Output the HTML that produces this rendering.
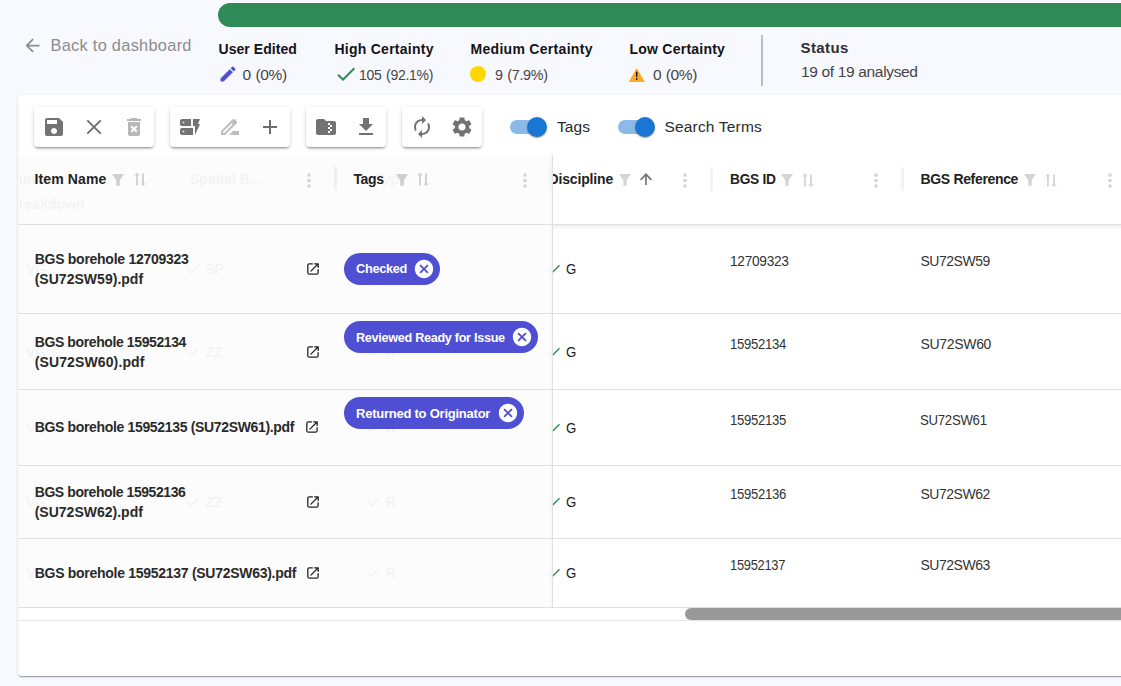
<!DOCTYPE html>
<html lang="en">
<head>
<meta charset="utf-8">
<title>Analysis</title>
<style>
html,body{margin:0;padding:0;overflow:hidden;background:#f8f8ff;}
#app{width:1121px;height:686px;overflow:hidden;background:#f8f8ff;font-family:"Liberation Sans",sans-serif;position:relative;}
.a{position:absolute;}
.t{position:absolute;white-space:nowrap;line-height:1;}
.ic{position:absolute;display:block;}
.grp{position:absolute;top:107px;height:40px;background:#fff;border-radius:4px;box-shadow:0 3px 1px -2px rgba(0,0,0,.2),0 2px 2px 0 rgba(0,0,0,.14),0 1px 5px 0 rgba(0,0,0,.12);}
.hl{position:absolute;left:18px;width:1103px;height:1px;background:#e0e0e0;}
.sep{position:absolute;top:166px;height:24px;width:3px;background:#f0f0f0;border-radius:1px;}
.chip{position:absolute;height:32px;border-radius:16px;background:#4f4fd3;left:344px;}
.ghost{position:absolute;white-space:nowrap;line-height:1;color:#efefef;font-size:14px;}
</style>
</head>
<body>
<div id="app">
<!-- progress -->
<div class="a" style="left:218px;top:3px;width:920px;height:24px;border-radius:12px;background:#2e8b57;"></div>
<svg class="ic" style="left:21.50px;top:34.50px;" width="21.0" height="21.0" viewBox="0 0 24 24"><path fill="#8c8c8c" d="M20 11H7.83l5.59-5.59L12 4l-8 8 8 8 1.41-1.41L7.83 13H20v-2z"/></svg>
<svg class="ic" style="left:217.80px;top:64.00px;" width="20.0" height="20.0" viewBox="0 0 24 24"><path fill="#4f4fd3" d="M3 17.25V21h3.75L17.81 9.94l-3.75-3.75L3 17.25zM20.71 7.04c.39-.39.39-1.02 0-1.41l-2.34-2.34c-.39-.39-1.02-.39-1.41 0l-1.83 1.83 3.75 3.75 1.83-1.83z"/></svg>
<svg class="ic" style="left:333.70px;top:61.60px;" width="24.0" height="24.0" viewBox="0 0 24 24"><path fill="#2e8b57" d="M9 16.17L4.83 12l-1.42 1.41L9 19 21 7l-1.41-1.41z"/></svg>
<div class="a" style="left:470px;top:66px;width:16px;height:16px;border-radius:50%;background:#ffd700;"></div>
<svg class="ic" style="left:628px;top:67px" width="18" height="16" viewBox="0 0 18 16"><path fill="#ffa927" d="M8.7 0.9L16.9 14.9H0.7z"/><path fill="#111" d="M7.95 4.8h1.5l-.15 5.3h-1.2zM8 11.1h1.4v1.7H8z"/></svg>
<div class="a" style="left:761px;top:35px;width:2px;height:51px;background:#bdbdbd;"></div>

<!-- card -->
<div class="a" style="left:18px;top:95px;width:1120px;height:581px;background:#fff;border-radius:4px;box-shadow:0 2px 1px -1px rgba(0,0,0,.2),0 1px 1px 0 rgba(0,0,0,.14),0 1px 3px 0 rgba(0,0,0,.12);"></div>

<!-- scrolled content under frozen -->
<svg class="ic" style="left:546px;top:261px" width="16" height="16" viewBox="0 0 24 24"><path fill="#2e8b57" d="M9 16.17L4.83 12l-1.42 1.41L9 19 21 7l-1.41-1.41z"/></svg>
<svg class="ic" style="left:546px;top:344px" width="16" height="16" viewBox="0 0 24 24"><path fill="#2e8b57" d="M9 16.17L4.83 12l-1.42 1.41L9 19 21 7l-1.41-1.41z"/></svg>
<svg class="ic" style="left:546px;top:420px" width="16" height="16" viewBox="0 0 24 24"><path fill="#2e8b57" d="M9 16.17L4.83 12l-1.42 1.41L9 19 21 7l-1.41-1.41z"/></svg>
<svg class="ic" style="left:546px;top:494px" width="16" height="16" viewBox="0 0 24 24"><path fill="#2e8b57" d="M9 16.17L4.83 12l-1.42 1.41L9 19 21 7l-1.41-1.41z"/></svg>
<svg class="ic" style="left:546px;top:565px" width="16" height="16" viewBox="0 0 24 24"><path fill="#2e8b57" d="M9 16.17L4.83 12l-1.42 1.41L9 19 21 7l-1.41-1.41z"/></svg>
<span class="t" id="c3" style="left:548.50px;top:171.85px;font-size:14px;font-weight:700;color:#222;letter-spacing:-0.158px;word-spacing:0px;">Discipline</span>
<!-- frozen bg -->
<div class="a" style="left:18px;top:155px;width:534px;height:452px;background:#fcfcfc;"></div>
<div class="a" style="left:552px;top:155px;width:1px;height:452px;background:#e0e0e0;"></div>
<div class="a" style="left:550px;top:155px;width:2px;height:452px;background:linear-gradient(90deg,#fcfcfc,#f2f2f2);"></div>

<!-- faint scrolled content showing through frozen columns -->
<div class="a" style="left:18px;top:155px;width:534px;height:452px;overflow:hidden;">
<span class="ghost" style="left:-8px;top:16.55px;font-size:14px;font-weight:700;color:#f3f3f3">Function</span>
<span class="ghost" style="left:-9px;top:41.65px;font-size:14px;font-weight:700;color:#f3f3f3">Breakdown</span>
<span class="ghost" style="left:172px;top:16.55px;font-size:14px;font-weight:700;color:#f3f3f3">Spatial B...</span>
<span class="ghost" style="left:357px;top:16.55px;font-size:14px;font-weight:700;color:#f3f3f3">Type</span>
<span class="ghost" style="left:8px;top:107.15px;font-size:14px;font-weight:400;color:#f1f1f1">VG</span>
<svg class="ic" style="left:167px;top:106px" width="16" height="16" viewBox="0 0 24 24"><path fill="#eef3f0" d="M9 16.17L4.83 12l-1.42 1.41L9 19 21 7l-1.41-1.41z"/></svg>
<span class="ghost" style="left:187.5px;top:107.15px;font-size:14px;font-weight:400;color:#f1f1f1">SP</span>
<span class="ghost" style="left:8px;top:190.15px;font-size:14px;font-weight:400;color:#f1f1f1">VG</span>
<svg class="ic" style="left:167px;top:189px" width="16" height="16" viewBox="0 0 24 24"><path fill="#eef3f0" d="M9 16.17L4.83 12l-1.42 1.41L9 19 21 7l-1.41-1.41z"/></svg>
<span class="ghost" style="left:187.5px;top:190.15px;font-size:14px;font-weight:400;color:#f1f1f1">ZZ</span>
<span class="ghost" style="left:8px;top:265.65px;font-size:14px;font-weight:400;color:#f1f1f1">VG</span>
<span class="ghost" style="left:8px;top:340.15px;font-size:14px;font-weight:400;color:#f1f1f1">VG</span>
<svg class="ic" style="left:167px;top:339px" width="16" height="16" viewBox="0 0 24 24"><path fill="#eef3f0" d="M9 16.17L4.83 12l-1.42 1.41L9 19 21 7l-1.41-1.41z"/></svg>
<span class="ghost" style="left:187.5px;top:340.15px;font-size:14px;font-weight:400;color:#f1f1f1">ZZ</span>
<span class="ghost" style="left:8px;top:411.15px;font-size:14px;font-weight:400;color:#f1f1f1">VG</span>
<svg class="ic" style="left:347px;top:189px" width="16" height="16" viewBox="0 0 24 24"><path fill="#eef3f0" d="M9 16.17L4.83 12l-1.42 1.41L9 19 21 7l-1.41-1.41z"/></svg>
<span class="ghost" style="left:367.7px;top:190.15px;font-size:14px;font-weight:400;color:#f1f1f1">R</span>
<svg class="ic" style="left:347px;top:264.5px" width="16" height="16" viewBox="0 0 24 24"><path fill="#eef3f0" d="M9 16.17L4.83 12l-1.42 1.41L9 19 21 7l-1.41-1.41z"/></svg>
<span class="ghost" style="left:367.7px;top:265.65px;font-size:14px;font-weight:400;color:#f1f1f1">R</span>
<svg class="ic" style="left:347px;top:339px" width="16" height="16" viewBox="0 0 24 24"><path fill="#eef3f0" d="M9 16.17L4.83 12l-1.42 1.41L9 19 21 7l-1.41-1.41z"/></svg>
<span class="ghost" style="left:367.7px;top:340.15px;font-size:14px;font-weight:400;color:#f1f1f1">R</span>
<svg class="ic" style="left:347px;top:410px" width="16" height="16" viewBox="0 0 24 24"><path fill="#eef3f0" d="M9 16.17L4.83 12l-1.42 1.41L9 19 21 7l-1.41-1.41z"/></svg>
<span class="ghost" style="left:367.7px;top:411.15px;font-size:14px;font-weight:400;color:#f1f1f1">R</span>
<svg class="ic" style="left:528px;top:106px" width="16" height="16" viewBox="0 0 24 24"><path fill="#edf3f0" d="M9 16.17L4.83 12l-1.42 1.41L9 19 21 7l-1.41-1.41z"/></svg>
<svg class="ic" style="left:-12px;top:106px" width="16" height="16" viewBox="0 0 24 24"><path fill="#edf3f0" d="M9 16.17L4.83 12l-1.42 1.41L9 19 21 7l-1.41-1.41z"/></svg>
<svg class="ic" style="left:528px;top:189px" width="16" height="16" viewBox="0 0 24 24"><path fill="#edf3f0" d="M9 16.17L4.83 12l-1.42 1.41L9 19 21 7l-1.41-1.41z"/></svg>
<svg class="ic" style="left:-12px;top:189px" width="16" height="16" viewBox="0 0 24 24"><path fill="#edf3f0" d="M9 16.17L4.83 12l-1.42 1.41L9 19 21 7l-1.41-1.41z"/></svg>
<svg class="ic" style="left:528px;top:265px" width="16" height="16" viewBox="0 0 24 24"><path fill="#edf3f0" d="M9 16.17L4.83 12l-1.42 1.41L9 19 21 7l-1.41-1.41z"/></svg>
<svg class="ic" style="left:-12px;top:265px" width="16" height="16" viewBox="0 0 24 24"><path fill="#edf3f0" d="M9 16.17L4.83 12l-1.42 1.41L9 19 21 7l-1.41-1.41z"/></svg>
<svg class="ic" style="left:528px;top:339px" width="16" height="16" viewBox="0 0 24 24"><path fill="#edf3f0" d="M9 16.17L4.83 12l-1.42 1.41L9 19 21 7l-1.41-1.41z"/></svg>
<svg class="ic" style="left:-12px;top:339px" width="16" height="16" viewBox="0 0 24 24"><path fill="#edf3f0" d="M9 16.17L4.83 12l-1.42 1.41L9 19 21 7l-1.41-1.41z"/></svg>
<svg class="ic" style="left:528px;top:410px" width="16" height="16" viewBox="0 0 24 24"><path fill="#edf3f0" d="M9 16.17L4.83 12l-1.42 1.41L9 19 21 7l-1.41-1.41z"/></svg>
<svg class="ic" style="left:-12px;top:410px" width="16" height="16" viewBox="0 0 24 24"><path fill="#edf3f0" d="M9 16.17L4.83 12l-1.42 1.41L9 19 21 7l-1.41-1.41z"/></svg>
</div>
<!-- toolbar groups -->
<div class="grp" style="left:34px;width:120px;"></div>
<div class="grp" style="left:170px;width:120px;"></div>
<div class="grp" style="left:306px;width:80px;"></div>
<div class="grp" style="left:402px;width:80px;"></div>
<svg class="ic" style="left:42.00px;top:115.00px;" width="24.0" height="24.0" viewBox="0 0 24 24"><path fill="#737373" d="M17 3H5c-1.11 0-2 .9-2 2v14c0 1.1.89 2 2 2h14c1.1 0 2-.9 2-2V7l-4-4zm-5 16c-1.66 0-3-1.34-3-3s1.34-3 3-3 3 1.34 3 3-1.34 3-3 3zm3-10H5V5h10v4z"/></svg>
<svg class="ic" style="left:86px;top:119px" width="16" height="16" viewBox="0 0 16 16"><path d="M1.3 1.3L14.7 14.7M14.7 1.3L1.3 14.7" stroke="#6e6e6e" stroke-width="1.9" fill="none"/></svg>
<svg class="ic" style="left:122.00px;top:115.00px;" width="24.0" height="24.0" viewBox="0 0 24 24"><path fill="#b8b8b8" d="M6 19c0 1.1.9 2 2 2h8c1.1 0 2-.9 2-2V7H6v12zm2.46-7.12l1.41-1.41L12 12.59l2.12-2.12 1.41 1.41L13.41 14l2.12 2.12-1.41 1.41L12 15.41l-2.12 2.12-1.41-1.41L10.59 14l-2.13-2.12zM15.5 4l-1-1h-5l-1 1H5v2h14V4z"/></svg>
<svg class="ic" style="left:178.00px;top:115.00px;" width="24.0" height="24.0" viewBox="0 0 24 24"><path fill="#737373" d="M17 20v-9h-2V4h7l-2 5h2l-5 11zm-2-7v7H4c-1.1 0-2-.9-2-2v-3c0-1.1.9-2 2-2h11zm-8.75 2.75h-1.5v1.5h1.5v-1.5zM13 4v7H4c-1.1 0-2-.9-2-2V6c0-1.1.9-2 2-2h9zM6.25 6.75h-1.5v1.5h1.5v-1.5z"/></svg>
<svg class="ic" style="left:218.00px;top:115.00px;" width="24.0" height="24.0" viewBox="0 0 24 24"><path fill="#bdbdbd" d="M18.41 5.8L17.2 4.59c-.78-.78-2.05-.78-2.83 0l-2.68 2.68L3 15.96V20h4.04l8.74-8.74 2.63-2.63c.79-.78.79-2.05 0-2.83zM6.21 18H5v-1.21l8.66-8.66 1.21 1.21L6.21 18zM11 20l4-4h6v4H11z"/></svg>
<svg class="ic" style="left:258.00px;top:115.00px;" width="24.0" height="24.0" viewBox="0 0 24 24"><path fill="#6e6e6e" d="M19 13h-6v6h-2v-6H5v-2h6V5h2v6h6v2z"/></svg>
<svg class="ic" style="left:314.00px;top:115.00px;" width="24.0" height="24.0" viewBox="0 0 24 24"><path fill="#737373" d="M20 6h-8l-2-2H4c-1.1 0-2 .9-2 2v12c0 1.1.9 2 2 2h16c1.1 0 2-.9 2-2V8c0-1.1-.9-2-2-2zm-2 6h-2v2h2v2h-2v2h-2v-2h2v-2h-2v-2h2v-2h-2V8h2v2h2v2z"/></svg>
<svg class="ic" style="left:354.00px;top:115.00px;" width="24.0" height="24.0" viewBox="0 0 24 24"><path fill="#737373" d="M19 9h-4V3H9v6H5l7 7 7-7zM5 18v2h14v-2H5z"/></svg>
<svg class="ic" style="left:410.00px;top:115.00px;" width="24.0" height="24.0" viewBox="0 0 24 24"><path fill="#737373" d="M12 6v3l4-4-4-4v3c-4.42 0-8 3.58-8 8 0 1.57.46 3.03 1.24 4.26L6.7 14.8c-.45-.83-.7-1.79-.7-2.8 0-3.31 2.69-6 6-6zm6.76 1.74L17.3 9.2c.44.84.7 1.79.7 2.8 0 3.31-2.69 6-6 6v-3l-4 4 4 4v-3c4.42 0 8-3.58 8-8 0-1.57-.46-3.03-1.24-4.26z"/></svg>
<svg class="ic" style="left:450.00px;top:115.00px;" width="24.0" height="24.0" viewBox="0 0 24 24"><path fill="#737373" d="M19.14 12.94c.04-.3.06-.61.06-.94 0-.32-.02-.64-.07-.94l2.03-1.58c.18-.14.23-.41.12-.61l-1.92-3.32c-.12-.22-.37-.29-.59-.22l-2.39.96c-.5-.38-1.03-.7-1.62-.94l-.36-2.54c-.04-.24-.24-.41-.48-.41h-3.84c-.24 0-.43.17-.47.41l-.36 2.54c-.59.24-1.13.57-1.62.94l-2.39-.96c-.22-.08-.47 0-.59.22L2.74 8.87c-.12.21-.08.47.12.61l2.03 1.58c-.05.3-.09.63-.09.94s.02.64.07.94l-2.03 1.58c-.18.14-.23.41-.12.61l1.92 3.32c.12.22.37.29.59.22l2.39-.96c.5.38 1.03.7 1.62.94l.36 2.54c.05.24.24.41.48.41h3.84c.24 0 .44-.17.47-.41l.36-2.54c.59-.24 1.13-.56 1.62-.94l2.39.96c.22.08.47 0 .59-.22l1.92-3.32c.12-.22.07-.47-.12-.61l-2.01-1.58zM12 15.6c-1.98 0-3.6-1.62-3.6-3.6s1.62-3.6 3.6-3.6 3.6 1.62 3.6 3.6-1.62 3.6-3.6 3.6z"/></svg>

<!-- switches -->
<div class="a" style="left:510px;top:120px;width:34px;height:14px;border-radius:7px;background:#8cbae8;"></div>
<div class="a" style="left:527px;top:117px;width:20px;height:20px;border-radius:50%;background:#1976d2;box-shadow:0 2px 1px -1px rgba(0,0,0,.2),0 1px 1px 0 rgba(0,0,0,.14),0 1px 3px 0 rgba(0,0,0,.12);"></div>
<div class="a" style="left:618px;top:120px;width:34px;height:14px;border-radius:7px;background:#8cbae8;"></div>
<div class="a" style="left:635px;top:117px;width:20px;height:20px;border-radius:50%;background:#1976d2;box-shadow:0 2px 1px -1px rgba(0,0,0,.2),0 1px 1px 0 rgba(0,0,0,.14),0 1px 3px 0 rgba(0,0,0,.12);"></div>

<!-- lines -->
<div class="hl" style="top:224px;"></div>
<div class="a" style="left:553px;top:225px;width:568px;height:5px;background:linear-gradient(#f0f0f0,#fff);"></div>
<div class="hl" style="top:313px;"></div>
<div class="hl" style="top:389px;"></div>
<div class="hl" style="top:465px;"></div>
<div class="hl" style="top:538px;"></div>
<div class="hl" style="top:607px;"></div>
<div class="hl" style="top:620px;background:#e6e6e6;"></div>
<!-- scrollbar -->
<div class="a" style="left:685px;top:608px;width:460px;height:12px;border-radius:6px;background:#999;"></div>

<!-- header separators -->
<div class="sep" style="left:333.5px;"></div>
<div class="sep" style="left:549px;background:#f3f3f3;"></div>
<div class="sep" style="left:709.5px;top:167px;background:#f3f3f3;"></div>
<div class="sep" style="left:900.5px;top:167px;background:#f3f3f3;"></div>

<!-- header icons -->
<svg class="ic" style="left:111.8px;top:174.2px" width="12" height="12" viewBox="0 0 12 12"><path fill="#cfcfcf" d="M0 0h12L7.7 6.3V11.7H4.3V6.3z"/></svg>
<svg class="ic" style="left:133.5px;top:172.3px" width="12" height="14" viewBox="0 0 12 14"><path fill="#d2d2d2" d="M2 2.2h1.9v11.2H2zM0 3.6L2.95 0.5L5.9 3.6zM8 1.5h2v10.5H8zM6 11.4h6L9 14z"/></svg>
<svg class="ic" style="left:306.8px;top:172.5px" width="4" height="15" viewBox="0 0 4 15"><circle cx="2" cy="2" r="1.85" fill="#d6d6d6"/><circle cx="2" cy="7.5" r="1.85" fill="#d6d6d6"/><circle cx="2" cy="13" r="1.85" fill="#d6d6d6"/></svg>
<svg class="ic" style="left:396.2px;top:174.2px" width="12" height="12" viewBox="0 0 12 12"><path fill="#cfcfcf" d="M0 0h12L7.7 6.3V11.7H4.3V6.3z"/></svg>
<svg class="ic" style="left:416.8px;top:172.3px" width="12" height="14" viewBox="0 0 12 14"><path fill="#d2d2d2" d="M2 2.2h1.9v11.2H2zM0 3.6L2.95 0.5L5.9 3.6zM8 1.5h2v10.5H8zM6 11.4h6L9 14z"/></svg>
<svg class="ic" style="left:523px;top:172.5px" width="4" height="15" viewBox="0 0 4 15"><circle cx="2" cy="2" r="1.85" fill="#d6d6d6"/><circle cx="2" cy="7.5" r="1.85" fill="#d6d6d6"/><circle cx="2" cy="13" r="1.85" fill="#d6d6d6"/></svg>
<svg class="ic" style="left:619px;top:174.2px" width="12" height="12" viewBox="0 0 12 12"><path fill="#d4d4d4" d="M0 0h12L7.7 6.3V11.7H4.3V6.3z"/></svg>
<svg class="ic" style="left:640px;top:173px" width="12" height="12" viewBox="0 0 12 12"><path fill="none" stroke="#757575" stroke-width="1.7" d="M6 12V1.4M0.6 6.8L6 1.2L11.4 6.8"/></svg>
<svg class="ic" style="left:683px;top:172.5px" width="4" height="15" viewBox="0 0 4 15"><circle cx="2" cy="2" r="1.85" fill="#d6d6d6"/><circle cx="2" cy="7.5" r="1.85" fill="#d6d6d6"/><circle cx="2" cy="13" r="1.85" fill="#d6d6d6"/></svg>
<svg class="ic" style="left:781px;top:174.2px" width="12" height="12" viewBox="0 0 12 12"><path fill="#d4d4d4" d="M0 0h12L7.7 6.3V11.7H4.3V6.3z"/></svg>
<svg class="ic" style="left:802px;top:172.5px" width="12" height="14" viewBox="0 0 12 14"><path fill="#d8d8d8" d="M2 2.2h1.9v11.2H2zM0 3.6L2.95 0.5L5.9 3.6zM8 1.5h2v10.5H8zM6 11.4h6L9 14z"/></svg>
<svg class="ic" style="left:874px;top:172.5px" width="4" height="15" viewBox="0 0 4 15"><circle cx="2" cy="2" r="1.85" fill="#d6d6d6"/><circle cx="2" cy="7.5" r="1.85" fill="#d6d6d6"/><circle cx="2" cy="13" r="1.85" fill="#d6d6d6"/></svg>
<svg class="ic" style="left:1024px;top:174.2px" width="12" height="12" viewBox="0 0 12 12"><path fill="#d4d4d4" d="M0 0h12L7.7 6.3V11.7H4.3V6.3z"/></svg>
<svg class="ic" style="left:1045px;top:172.5px" width="12" height="14" viewBox="0 0 12 14"><path fill="#d8d8d8" d="M2 2.2h1.9v11.2H2zM0 3.6L2.95 0.5L5.9 3.6zM8 1.5h2v10.5H8zM6 11.4h6L9 14z"/></svg>
<svg class="ic" style="left:1107.5px;top:172.5px" width="4" height="15" viewBox="0 0 4 15"><circle cx="2" cy="2" r="1.85" fill="#d6d6d6"/><circle cx="2" cy="7.5" r="1.85" fill="#d6d6d6"/><circle cx="2" cy="13" r="1.85" fill="#d6d6d6"/></svg>
<div class="a" style="left:306px;top:261.3px;width:14px;height:15px;background:#fff;border-radius:2px;"></div><svg class="ic" style="left:307px;top:262.8px" width="12" height="12" viewBox="0 0 12 12"><path fill="none" stroke="#222" stroke-width="1.3" stroke-linecap="round" stroke-linejoin="round" d="M5.4 0.9H2.3C1.5 0.9 0.8 1.6 0.8 2.4V9.7C0.8 10.5 1.5 11.2 2.3 11.2H9.6C10.4 11.2 11.1 10.5 11.1 9.7V6.6M3.9 8.1L11 1M7.6 0.8H11.2V4.4"/></svg>
<div class="a" style="left:306px;top:344.3px;width:14px;height:15px;background:#fff;border-radius:2px;"></div><svg class="ic" style="left:307px;top:345.8px" width="12" height="12" viewBox="0 0 12 12"><path fill="none" stroke="#222" stroke-width="1.3" stroke-linecap="round" stroke-linejoin="round" d="M5.4 0.9H2.3C1.5 0.9 0.8 1.6 0.8 2.4V9.7C0.8 10.5 1.5 11.2 2.3 11.2H9.6C10.4 11.2 11.1 10.5 11.1 9.7V6.6M3.9 8.1L11 1M7.6 0.8H11.2V4.4"/></svg>
<div class="a" style="left:304.5px;top:419.9px;width:14px;height:15px;background:#fff;border-radius:2px;"></div><svg class="ic" style="left:305.5px;top:421.4px" width="12" height="12" viewBox="0 0 12 12"><path fill="none" stroke="#222" stroke-width="1.3" stroke-linecap="round" stroke-linejoin="round" d="M5.4 0.9H2.3C1.5 0.9 0.8 1.6 0.8 2.4V9.7C0.8 10.5 1.5 11.2 2.3 11.2H9.6C10.4 11.2 11.1 10.5 11.1 9.7V6.6M3.9 8.1L11 1M7.6 0.8H11.2V4.4"/></svg>
<div class="a" style="left:305.8px;top:494.3px;width:14px;height:15px;background:#fff;border-radius:2px;"></div><svg class="ic" style="left:306.8px;top:495.8px" width="12" height="12" viewBox="0 0 12 12"><path fill="none" stroke="#222" stroke-width="1.3" stroke-linecap="round" stroke-linejoin="round" d="M5.4 0.9H2.3C1.5 0.9 0.8 1.6 0.8 2.4V9.7C0.8 10.5 1.5 11.2 2.3 11.2H9.6C10.4 11.2 11.1 10.5 11.1 9.7V6.6M3.9 8.1L11 1M7.6 0.8H11.2V4.4"/></svg>
<div class="a" style="left:305.8px;top:565.7px;width:14px;height:15px;background:#fff;border-radius:2px;"></div><svg class="ic" style="left:306.8px;top:567.2px" width="12" height="12" viewBox="0 0 12 12"><path fill="none" stroke="#222" stroke-width="1.3" stroke-linecap="round" stroke-linejoin="round" d="M5.4 0.9H2.3C1.5 0.9 0.8 1.6 0.8 2.4V9.7C0.8 10.5 1.5 11.2 2.3 11.2H9.6C10.4 11.2 11.1 10.5 11.1 9.7V6.6M3.9 8.1L11 1M7.6 0.8H11.2V4.4"/></svg>

<!-- chips -->
<div class="chip" style="top:253px;width:96px;"></div>
<div class="chip" style="top:321px;width:194px;"></div>
<div class="chip" style="top:397px;width:180px;"></div>
<svg class="ic" style="left:413.00px;top:258.00px;" width="22.0" height="22.0" viewBox="0 0 24 24"><path fill="#ffffff" d="M12 2C6.47 2 2 6.47 2 12s4.47 10 10 10 10-4.47 10-10S17.53 2 12 2zm5 13.59L15.59 17 12 13.41 8.41 17 7 15.59 10.59 12 7 8.41 8.41 7 12 10.59 15.59 7 17 8.41 13.41 12 17 15.59z"/></svg>
<svg class="ic" style="left:511.00px;top:326.00px;" width="22.0" height="22.0" viewBox="0 0 24 24"><path fill="#ffffff" d="M12 2C6.47 2 2 6.47 2 12s4.47 10 10 10 10-4.47 10-10S17.53 2 12 2zm5 13.59L15.59 17 12 13.41 8.41 17 7 15.59 10.59 12 7 8.41 8.41 7 12 10.59 15.59 7 17 8.41 13.41 12 17 15.59z"/></svg>
<svg class="ic" style="left:497.00px;top:402.00px;" width="22.0" height="22.0" viewBox="0 0 24 24"><path fill="#ffffff" d="M12 2C6.47 2 2 6.47 2 12s4.47 10 10 10 10-4.47 10-10S17.53 2 12 2zm5 13.59L15.59 17 12 13.41 8.41 17 7 15.59 10.59 12 7 8.41 8.41 7 12 10.59 15.59 7 17 8.41 13.41 12 17 15.59z"/></svg>

<span class="t" id="back" style="left:50.50px;top:37.32px;font-size:16.4px;font-weight:400;color:#8c8c8c;letter-spacing:0.269px;word-spacing:0px;">Back to dashboard</span>
<span class="t" id="h1" style="left:218.50px;top:42.15px;font-size:14px;font-weight:700;color:#141414;letter-spacing:0.061px;word-spacing:0px;">User Edited</span>
<span class="t" id="h2" style="left:334.50px;top:42.15px;font-size:14px;font-weight:700;color:#141414;letter-spacing:0.249px;word-spacing:0px;">High Certainty</span>
<span class="t" id="h3" style="left:470.50px;top:42.15px;font-size:14px;font-weight:700;color:#141414;letter-spacing:0.297px;word-spacing:0px;">Medium Certainty</span>
<span class="t" id="h4" style="left:629.50px;top:42.15px;font-size:14px;font-weight:700;color:#141414;letter-spacing:0.237px;word-spacing:0px;">Low Certainty</span>
<span class="t" id="v1" style="left:242.60px;top:66.88px;font-size:15.5px;font-weight:400;color:#454545;letter-spacing:-0.298px;word-spacing:0.5px;">0 (0%)</span>
<span class="t" id="v2" style="left:358.50px;top:66.88px;font-size:15.5px;font-weight:400;color:#454545;letter-spacing:-0.300px;word-spacing:1px;transform:scaleX(0.9031);transform-origin:0 0;">105 (92.1%)</span>
<span class="t" id="v3" style="left:494.50px;top:66.88px;font-size:15.5px;font-weight:400;color:#454545;letter-spacing:-0.300px;word-spacing:1px;transform:scaleX(0.9212);transform-origin:0 0;">9 (7.9%)</span>
<span class="t" id="v4" style="left:653.00px;top:66.88px;font-size:15.5px;font-weight:400;color:#454545;letter-spacing:-0.338px;word-spacing:0.5px;">0 (0%)</span>
<span class="t" id="st" style="left:800.50px;top:39.80px;font-size:15px;font-weight:700;color:#2e2e2e;letter-spacing:0.421px;word-spacing:0px;">Status</span>
<span class="t" id="sv" style="left:801.00px;top:63.68px;font-size:15.5px;font-weight:400;color:#454545;letter-spacing:-0.338px;word-spacing:0px;">19 of 19 analysed</span>
<span class="t" id="tg" style="left:557.00px;top:119.48px;font-size:15.5px;font-weight:400;color:#2a2a2a;letter-spacing:0.072px;word-spacing:0px;">Tags</span>
<span class="t" id="se" style="left:664.50px;top:119.48px;font-size:15.5px;font-weight:400;color:#2a2a2a;letter-spacing:0.175px;word-spacing:0px;">Search Terms</span>
<span class="t" id="c1" style="left:34.50px;top:171.55px;font-size:14px;font-weight:700;color:#222;letter-spacing:0.138px;word-spacing:0px;">Item Name</span>
<span class="t" id="c2" style="left:353.50px;top:171.55px;font-size:14px;font-weight:700;color:#222;letter-spacing:-0.407px;word-spacing:0px;">Tags</span>
<span class="t" id="c4" style="left:729.50px;top:171.85px;font-size:14px;font-weight:700;color:#222;letter-spacing:-0.300px;word-spacing:0px;transform:scaleX(0.9826);transform-origin:0 0;">BGS ID</span>
<span class="t" id="c5" style="left:920.50px;top:171.85px;font-size:14px;font-weight:700;color:#222;letter-spacing:-0.335px;word-spacing:0px;">BGS Reference</span>
<span class="t" id="n1a" style="left:34.70px;top:252.15px;font-size:14px;font-weight:700;color:#2a2a2a;letter-spacing:-0.271px;word-spacing:0px;">BGS borehole 12709323</span>
<span class="t" id="n1b" style="left:34.70px;top:272.35px;font-size:14px;font-weight:700;color:#2a2a2a;letter-spacing:0.023px;word-spacing:0px;">(SU72SW59).pdf</span>
<span class="t" id="n2a" style="left:34.70px;top:334.65px;font-size:14px;font-weight:700;color:#2a2a2a;letter-spacing:-0.391px;word-spacing:0px;">BGS borehole 15952134</span>
<span class="t" id="n2b" style="left:34.70px;top:355.15px;font-size:14px;font-weight:700;color:#2a2a2a;letter-spacing:0.123px;word-spacing:0px;">(SU72SW60).pdf</span>
<span class="t" id="n3" style="left:34.70px;top:420.15px;font-size:14px;font-weight:700;color:#2a2a2a;letter-spacing:-0.338px;word-spacing:0px;">BGS borehole 15952135 (SU72SW61).pdf</span>
<span class="t" id="n4a" style="left:34.70px;top:485.15px;font-size:14px;font-weight:700;color:#2a2a2a;letter-spacing:-0.416px;word-spacing:0px;">BGS borehole 15952136</span>
<span class="t" id="n4b" style="left:34.70px;top:505.15px;font-size:14px;font-weight:700;color:#2a2a2a;letter-spacing:0.007px;word-spacing:0px;">(SU72SW62).pdf</span>
<span class="t" id="n5" style="left:34.70px;top:566.15px;font-size:14px;font-weight:700;color:#2a2a2a;letter-spacing:-0.281px;word-spacing:0px;">BGS borehole 15952137 (SU72SW63).pdf</span>
<span class="t" id="g1" style="left:565.50px;top:262.15px;font-size:14px;font-weight:400;color:#222;letter-spacing:-0.300px;word-spacing:0px;transform:scaleX(0.9476);transform-origin:0 0;">G</span>
<span class="t" id="g2" style="left:565.50px;top:345.15px;font-size:14px;font-weight:400;color:#222;letter-spacing:-0.300px;word-spacing:0px;transform:scaleX(0.9476);transform-origin:0 0;">G</span>
<span class="t" id="g3" style="left:565.50px;top:421.15px;font-size:14px;font-weight:400;color:#222;letter-spacing:-0.300px;word-spacing:0px;transform:scaleX(0.9476);transform-origin:0 0;">G</span>
<span class="t" id="g4" style="left:565.50px;top:495.15px;font-size:14px;font-weight:400;color:#222;letter-spacing:-0.300px;word-spacing:0px;transform:scaleX(0.9476);transform-origin:0 0;">G</span>
<span class="t" id="g5" style="left:565.50px;top:566.15px;font-size:14px;font-weight:400;color:#222;letter-spacing:-0.300px;word-spacing:0px;transform:scaleX(0.9476);transform-origin:0 0;">G</span>
<span class="t" id="i1" style="left:730.00px;top:254.45px;font-size:14px;font-weight:400;color:#333;letter-spacing:-0.300px;word-spacing:0px;transform:scaleX(0.9788);transform-origin:0 0;">12709323</span>
<span class="t" id="i2" style="left:730.00px;top:337.15px;font-size:14px;font-weight:400;color:#333;letter-spacing:-0.300px;word-spacing:0px;transform:scaleX(0.9373);transform-origin:0 0;">15952134</span>
<span class="t" id="i3" style="left:730.00px;top:413.15px;font-size:14px;font-weight:400;color:#333;letter-spacing:-0.300px;word-spacing:0px;transform:scaleX(0.9373);transform-origin:0 0;">15952135</span>
<span class="t" id="i4" style="left:730.00px;top:487.15px;font-size:14px;font-weight:400;color:#333;letter-spacing:-0.300px;word-spacing:0px;transform:scaleX(0.9373);transform-origin:0 0;">15952136</span>
<span class="t" id="i5" style="left:730.00px;top:558.15px;font-size:14px;font-weight:400;color:#333;letter-spacing:-0.300px;word-spacing:0px;transform:scaleX(0.9206);transform-origin:0 0;">15952137</span>
<span class="t" id="r1" style="left:920.40px;top:254.45px;font-size:14px;font-weight:400;color:#333;letter-spacing:-0.448px;word-spacing:0px;">SU72SW59</span>
<span class="t" id="r2" style="left:920.40px;top:337.15px;font-size:14px;font-weight:400;color:#333;letter-spacing:-0.305px;word-spacing:0px;">SU72SW60</span>
<span class="t" id="r3" style="left:920.40px;top:413.15px;font-size:14px;font-weight:400;color:#333;letter-spacing:-0.300px;word-spacing:0px;transform:scaleX(0.9432);transform-origin:0 0;">SU72SW61</span>
<span class="t" id="r4" style="left:920.40px;top:487.15px;font-size:14px;font-weight:400;color:#333;letter-spacing:-0.448px;word-spacing:0px;">SU72SW62</span>
<span class="t" id="r5" style="left:920.40px;top:558.15px;font-size:14px;font-weight:400;color:#333;letter-spacing:-0.448px;word-spacing:0px;">SU72SW63</span>
<span class="t" id="k1" style="left:356.00px;top:262.40px;font-size:13px;font-weight:700;color:#fff;letter-spacing:-0.300px;word-spacing:0px;transform:scaleX(0.9807);transform-origin:0 0;">Checked</span>
<span class="t" id="k2" style="left:356.00px;top:331.00px;font-size:13px;font-weight:700;color:#fff;letter-spacing:-0.300px;word-spacing:0px;transform:scaleX(0.9712);transform-origin:0 0;">Reviewed Ready for Issue</span>
<span class="t" id="k3" style="left:356.00px;top:406.90px;font-size:13px;font-weight:700;color:#fff;letter-spacing:-0.238px;word-spacing:0px;">Returned to Originator</span>
</div>
</body>
</html>
